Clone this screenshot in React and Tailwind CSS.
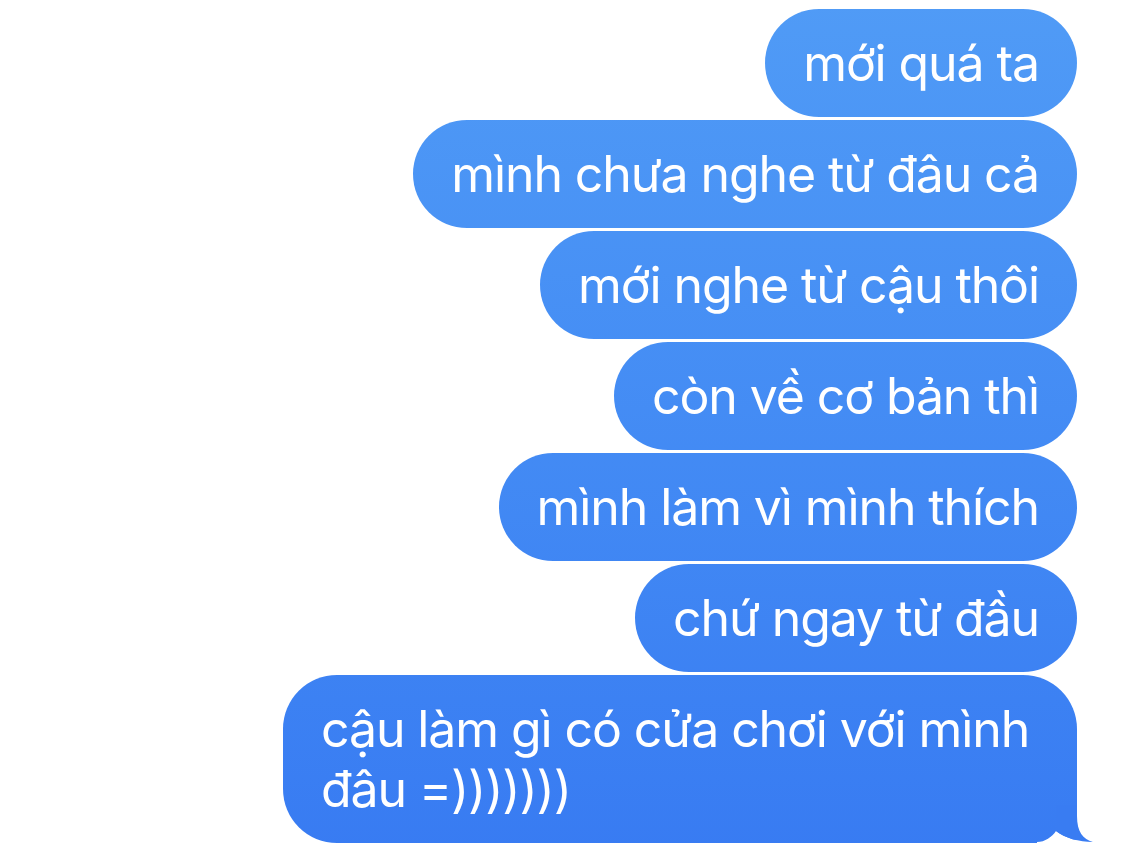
import React from "react";

const messages = [
  "mới quá ta",
  "mình chưa nghe từ đâu cả",
  "mới nghe từ cậu thôi",
  "còn về cơ bản thì",
  "mình làm vì mình thích",
  "chứ ngay từ đầu",
];

function Bubble({ children }) {
  return (
    <div className="rounded-[54px] bg-gradient-to-b from-[#509bf6] to-[#387bf2] bg-fixed px-[38px] py-[24px] text-white">
      {children}
    </div>
  );
}

export default function App() {
  return (
    <div
      className="h-[855px] w-[1125px] overflow-hidden bg-white pt-[9px] pr-[48px] flex flex-col items-end gap-[3px] text-[50px] leading-[60px] tracking-[-1.1px]"
      style={{ fontFamily: "Inter, 'Noto Sans', sans-serif" }}
    >
      {messages.map((m, i) => (
        <Bubble key={i}>{m}</Bubble>
      ))}

      {/* last bubble with tail */}
      <div className="relative w-[794px]">
        <div className="rounded-[54px] rounded-br-none bg-gradient-to-b from-[#509bf6] to-[#387bf2] bg-fixed px-[38px] py-[24px] text-white">
          cậu làm gì có cửa chơi với mình đâu =)))))))
        </div>
        <svg
          className="absolute right-[-16px] bottom-0"
          width="56"
          height="38"
          viewBox="0 0 56 38"
        >
          <path d="M-1 38 L0 37 C8 37 15 32 19 26 C28 33 42 37 56 37 L56 38 Z" fill="#ffffff" />
          <path d="M40 0 L40 11 C40 27 46 34 56 37 C42 37 28 33 19 26 L19 0 Z" fill="#397cf2" />
        </svg>
      </div>
    </div>
  );
}
